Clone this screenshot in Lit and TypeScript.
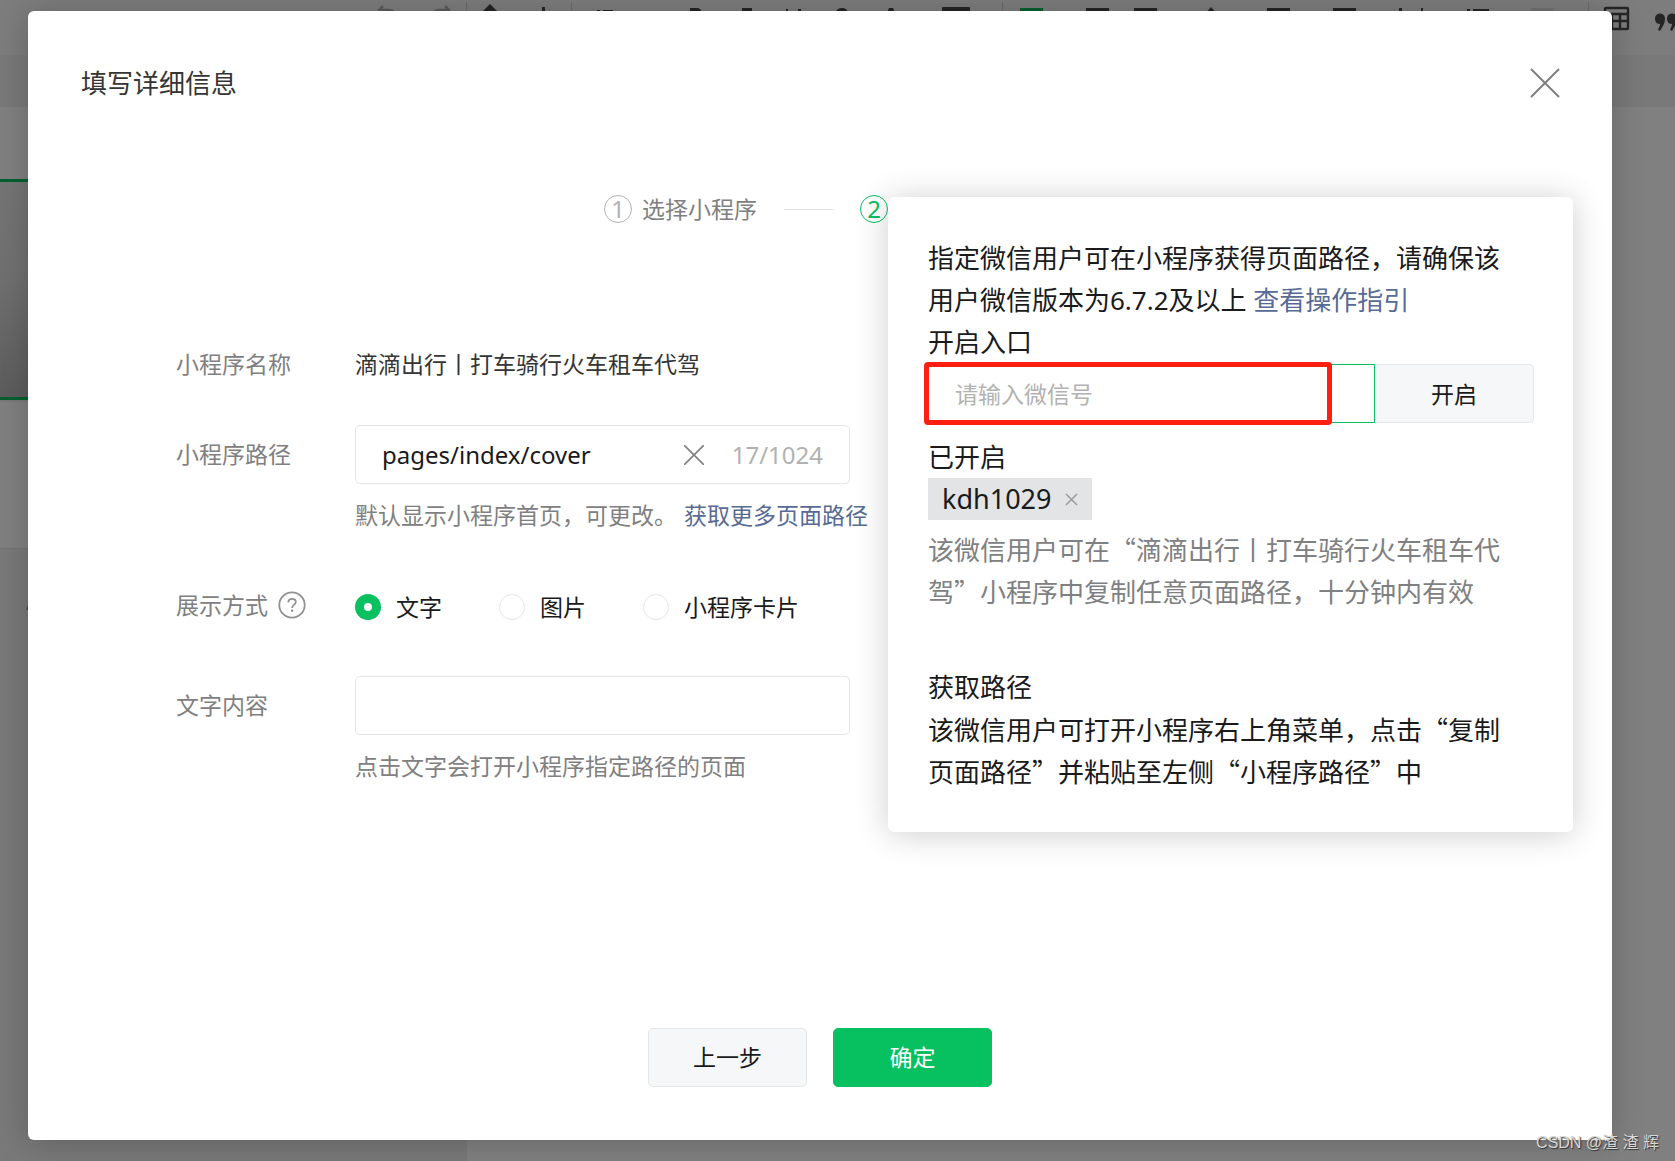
import { LitElement, html, css, svg } from "lit";
import { customElement, state } from "lit/decorators.js";

const dark = "#252525";

@customElement("editor-backdrop")
export class EditorBackdrop extends LitElement {
  static styles = css`
    :host {
      display: flex;
      flex-direction: column;
      background: #808080;
      overflow: hidden;
    }
    .toolbar {
      height: 55px;
      flex: none;
      background: #7d7d7d;
      overflow: hidden;
    }
    .toolbar svg {
      display: block;
    }
    .band {
      height: 52px;
      flex: none;
      background: #797979;
    }
    .columns {
      flex: 1;
      display: flex;
    }
    .side {
      width: 467px;
      flex: none;
      display: flex;
      flex-direction: column;
      background: #797979;
    }
    .blank {
      height: 72px;
      background: #808080;
    }
    .cover {
      height: 215px;
      border-top: 3px solid #046030;
      border-bottom: 3px solid #046030;
      background: linear-gradient(#757575 0%, #707070 45%, #5c5c5c 100%);
    }
    .article {
      height: 146px;
      border-top: 2px solid #797979;
      border-bottom: 1px solid #737373;
      background: #808080;
    }
    .mark {
      display: block;
      margin: 54px 0 0 26px;
    }
  `;

  render() {
    const bars = [1086, 1134, 1267, 1333];
    const seps = [466, 571, 1002, 1588];
    return html`
      <div class="toolbar">
        <svg width="1675" height="55" viewBox="0 0 1675 55" aria-hidden="true">
          ${seps.map((x) => svg`<rect x=${x} y="2" width="1" height="26" fill="#6d6d6d" />`)}
          <g fill="none" stroke="#5c5c5c" stroke-width="2.5">
            <path d="M383 6l-4 4 4 5M379 10h9q8 0 9 8" />
            <path d="M445 6l4 4-4 5M449 10h-9q-8 0-9 8" />
          </g>
          <g fill=${dark}>
            <path d="M490 4l8 8-8 8-8-8z" />
            <rect x="542" y="7" width="3" height="16" />
            <path d="M597 10h3v12h-3zM603 10h10v3h-10z" />
            <path d="M690 8h7q4 0 5 5h-12z" />
            <rect x="742" y="8" width="10" height="4" />
            <path d="M786 9h2v6h-2zM798 9h3v6h-3z" />
            <path d="M835 13q2-5 7-5t6 5z" />
            <path d="M889 8h4l2 5h-8z" />
            <rect x="942" y="7" width="28" height="20" rx="1" />
            ${bars.map((x) => svg`<rect x=${x} y="8" width="23" height="3" />`)}
            <path d="M1211 7l7 8h-14z" />
            <rect x="1399" y="8" width="3" height="14" />
            <rect x="1421" y="8" width="2" height="14" />
            <rect x="1467" y="9" width="3" height="3" />
            <rect x="1473" y="9" width="16" height="3" />
            <path d="M1655 18a5 5 0 1 1 10 1c0 4-2 7-5 12l-2-1c1-3 2-4 2-6-4 0-5-3-5-6z" />
            <path d="M1667 18a5 5 0 1 1 10 1c0 4-2 7-5 12l-2-1c1-3 2-4 2-6-4 0-5-3-5-6z" />
          </g>
          <rect x="1020" y="8" width="23" height="3" fill="#046030" />
          <rect x="1531" y="8" width="23" height="3" fill="#737373" />
          <g fill="none" stroke=${dark} stroke-width="2.4">
            <rect x="1605" y="8" width="23" height="21" rx="1" />
            <path d="M1605 14h23M1605 21h23M1612 14v15M1620 14v15" />
          </g>
        </svg>
      </div>
      <div class="band"></div>
      <div class="columns">
        <div class="side">
          <div class="blank"></div>
          <div class="cover"></div>
          <div class="article"></div>
          <svg class="mark" width="4" height="8" viewBox="0 0 4 8" aria-hidden="true">
            <path d="M0 7L3 0v7z" fill="#4a4a4a" />
          </svg>
        </div>
      </div>
    `;
  }
}

@customElement("path-guide")
export class PathGuide extends LitElement {
  static styles = css`
    :host {
      display: block;
      box-sizing: border-box;
      padding: 40px 39px 40px 40px;
      border-radius: 6px;
      background: #fff;
      box-shadow: 0 2px 33px rgba(0, 0, 0, 0.2);
      color: #1a1a1b;
      font-size: 26px;
      line-height: 42px;
    }
    p,
    label {
      display: block;
      margin: 0;
      padding-right: 12px;
    }
    a {
      color: #576b95;
      text-decoration: none;
    }
    .cjk {
      font-family: "Noto Sans CJK SC", sans-serif;
    }
    .group {
      position: relative;
      display: flex;
      margin-top: 1px;
    }
    input {
      flex: 1;
      min-width: 0;
      height: 59px;
      box-sizing: border-box;
      padding: 0 26px;
      border: 1px solid #07c160;
      border-radius: 5px 0 0 5px;
      background: #fff;
      font: inherit;
      font-size: 23px;
      color: inherit;
      outline: none;
    }
    input::placeholder {
      color: #b2b2b2;
      opacity: 1;
    }
    .open {
      width: 159px;
      height: 59px;
      border: 1px solid #e4e6e8;
      border-left: 0;
      border-radius: 0 5px 5px 0;
      background: #f6f7f9;
      color: inherit;
      font: inherit;
      font-size: 23px;
    }
    .highlight {
      position: absolute;
      left: -4px;
      top: -2px;
      width: 408px;
      height: 63px;
      box-sizing: border-box;
      border: 5px solid #ff1f10;
      border-radius: 4px;
      pointer-events: none;
    }
    .opened {
      margin-top: 13px;
    }
    .tag {
      display: inline-flex;
      align-items: center;
      gap: 13px;
      height: 42px;
      padding: 0 14px;
      background: #e2e4e6;
      font-size: 27px;
    }
    .remove {
      display: flex;
      padding: 0;
      border: 0;
      background: none;
    }
    .tags {
      display: flex;
    }
    .note {
      margin-top: 8px;
      color: #7f8081;
    }
    .last {
      margin-top: 54px;
    }
  `;

  render() {
    return html`
      <p>
        指定微信用户可在小程序获得页面路径，请确保该用户微信版本为6.7.2及以上
        <a href="#guide">查看操作指引</a>
      </p>
      <label for="wechat">开启入口</label>
      <div class="group">
        <input id="wechat" type="text" placeholder="请输入微信号" />
        <button class="open" type="button">开启</button>
        <span class="highlight"></span>
      </div>
      <p class="opened">已开启</p>
      <div class="tags">
        <span class="tag">
          kdh1029
          <button class="remove" type="button" aria-label="×">
            <svg width="13" height="13" viewBox="0 0 13 13" aria-hidden="true">
              <path d="M1 1l11 11M12 1L1 12" stroke="#9a9b9c" stroke-width="1.5" />
            </svg>
          </button>
        </span>
      </div>
      <p class="note cjk">
        该微信用户可在“滴滴出行丨打车骑行火车租车代驾”小程序中复制任意页面路径，十分钟内有效
      </p>
      <p class="last">获取路径</p>
      <p class="cjk">该微信用户可打开小程序右上角菜单，点击“复制页面路径”并粘贴至左侧“小程序路径”中</p>
    `;
  }
}

@customElement("app-root")
export class AppRoot extends LitElement {
  static styles = css`
    :host {
      position: relative;
      display: flex;
      box-sizing: border-box;
      min-height: 100vh;
      padding: 11px 63px 21px 28px;
      font-family: "Noto Sans", "Noto Sans CJK SC", sans-serif;
      font-size: 23px;
      line-height: 37px;
      color: #1a1a1b;
    }
    editor-backdrop {
      position: absolute;
      inset: 0;
    }
    .dialog {
      position: relative;
      flex: 1;
      min-width: 0;
      display: flex;
      flex-direction: column;
      border-radius: 6px;
      background: #fff;
      box-shadow: 0 2px 33px rgba(0, 0, 0, 0.22);
    }
    button,
    input {
      font: inherit;
      color: inherit;
    }
    header {
      display: flex;
      align-items: center;
      justify-content: space-between;
      height: 144px;
      padding: 0 52px 0 53px;
    }
    h1 {
      margin: 0;
      font-size: 26px;
      font-weight: 400;
      color: #353535;
    }
    .icon {
      display: flex;
      flex: none;
      padding: 0;
      border: 0;
      background: none;
    }
    .steps {
      display: flex;
      align-items: center;
      justify-content: center;
      height: 28px;
      margin: 40px 0 0;
      padding: 0 148px 0 0;
      list-style: none;
      color: #7f8081;
    }
    .step {
      display: flex;
      align-items: center;
      gap: 10px;
    }
    .num {
      width: 26px;
      height: 26px;
      border: 1px solid #b2b2b2;
      border-radius: 50%;
      color: #b2b2b2;
      font-size: 24px;
      line-height: 26px;
      text-align: center;
    }
    .current .num {
      border-color: #07c160;
      color: #07c160;
    }
    .line {
      width: 49px;
      height: 1px;
      margin: 0 27px;
      background: #e2e2e2;
    }
    form {
      flex: 1;
      display: flex;
      flex-direction: column;
    }
    .fields {
      display: grid;
      grid-template-columns: 179px 495px;
      row-gap: 42px;
      padding: 123px 0 53px 148px;
    }
    .label {
      display: flex;
      align-items: center;
      align-self: start;
      gap: 10px;
      color: #7f8081;
    }
    .tall {
      height: 58px;
    }
    .value {
      color: #353535;
    }
    .box {
      display: flex;
      align-items: center;
      box-sizing: border-box;
      height: 59px;
      padding: 0 26px;
      border: 1px solid #e4e6e8;
      border-radius: 5px;
      font-size: 24px;
    }
    .box input {
      flex: 1;
      min-width: 0;
      padding: 0;
      border: 0;
      outline: none;
      background: none;
    }
    .count {
      margin-left: 28px;
      color: #b2b2b2;
    }
    .hint {
      margin: 13px 0 0;
      white-space: nowrap;
      color: #7f8081;
    }
    .hint a {
      margin-left: 7px;
      color: #576b95;
      text-decoration: none;
    }
    .radios {
      display: flex;
      align-items: center;
      gap: 57px;
      height: 58px;
      box-sizing: border-box;
      padding-top: 4px;
    }
    .radio {
      display: flex;
      align-items: center;
      gap: 15px;
      white-space: nowrap;
    }
    .radio input {
      appearance: none;
      width: 26px;
      height: 26px;
      margin: 0;
      border: 1px solid #e4e6e8;
      border-radius: 50%;
      background: #fff;
    }
    .radio input:checked {
      border: 9px solid #07c160;
    }
    footer {
      display: flex;
      justify-content: center;
      gap: 26px;
      margin-top: auto;
      padding-bottom: 53px;
    }
    .btn {
      width: 159px;
      height: 59px;
      border: 1px solid #e4e6e8;
      border-radius: 5px;
      background: #f6f7f9;
    }
    .primary {
      border-color: #07c160;
      background: #07c160;
      color: #fff;
    }
    path-guide {
      position: absolute;
      top: 186px;
      right: 39px;
      width: 685px;
    }
    .watermark {
      position: absolute;
      right: 16px;
      bottom: 7px;
      font-family: "Liberation Sans", "Noto Sans CJK SC", sans-serif;
      font-size: 16px;
      line-height: 22px;
      color: #d8d8d8;
      text-shadow: 1px 1px 1px #333;
    }
  `;

  @state() private path = "pages/index/cover";
  @state() private mode = "文字";

  render() {
    return html`
      <editor-backdrop></editor-backdrop>
      <main class="dialog">
        <header>
          <h1>填写详细信息</h1>
          <button class="icon" type="button" aria-label="×">
            <svg width="30" height="30" viewBox="0 0 30 30" aria-hidden="true">
              <path d="M1 1l28 28M29 1L1 29" stroke="#7f7f7f" stroke-width="2" />
            </svg>
          </button>
        </header>
        <ol class="steps">
          <li class="step"><span class="num">1</span>选择小程序</li>
          <li class="line" role="presentation"></li>
          <li class="step current"><span class="num">2</span></li>
        </ol>
        <form @submit=${(e: Event) => e.preventDefault()}>
          <div class="fields">
            <span class="label">小程序名称</span>
            <span class="value">滴滴出行丨打车骑行火车租车代驾</span>

            <label class="label tall" for="path">小程序路径</label>
            <div>
              <div class="box">
                <input
                  id="path"
                  type="text"
                  .value=${this.path}
                  @input=${(e: Event) => (this.path = (e.target as HTMLInputElement).value)}
                />
                <button class="icon" type="button" aria-label="×" @click=${() => (this.path = "")}>
                  <svg width="20" height="20" viewBox="0 0 20 20" aria-hidden="true">
                    <path d="M0 0l20 20M20 0L0 20" stroke="#7f7f7f" stroke-width="1.6" />
                  </svg>
                </button>
                <span class="count">${this.path.length}/1024</span>
              </div>
              <p class="hint">默认显示小程序首页，可更改。<a href="#more">获取更多页面路径</a></p>
            </div>

            <span class="label tall">
              <span id="mode">展示方式</span>
              <svg width="28" height="28" viewBox="0 0 28 28" aria-hidden="true" fill="none" stroke="#909192" stroke-width="1.8">
                <circle cx="14" cy="14" r="12.7" />
                <path d="M10.3 11.6c0-2.4 1.6-3.8 3.8-3.8s3.7 1.4 3.7 3.3c0 2.8-3.7 2.9-3.7 6" />
                <path d="M14.1 18.6v2.2" stroke-width="2.2" />
              </svg>
            </span>
            <div class="radios" role="radiogroup" aria-labelledby="mode">
              ${["文字", "图片", "小程序卡片"].map(
                (name) => html`
                  <label class="radio">
                    <input
                      type="radio"
                      name="mode"
                      .checked=${this.mode === name}
                      @change=${() => (this.mode = name)}
                    />
                    ${name}
                  </label>
                `
              )}
            </div>

            <label class="label tall" for="text">文字内容</label>
            <div>
              <div class="box"><input id="text" type="text" /></div>
              <p class="hint">点击文字会打开小程序指定路径的页面</p>
            </div>
          </div>
          <footer>
            <button class="btn" type="button">上一步</button>
            <button class="btn primary" type="submit">确定</button>
          </footer>
        </form>
        <path-guide></path-guide>
      </main>
      <div class="watermark">CSDN @渣 渣 辉</div>
    `;
  }
}
